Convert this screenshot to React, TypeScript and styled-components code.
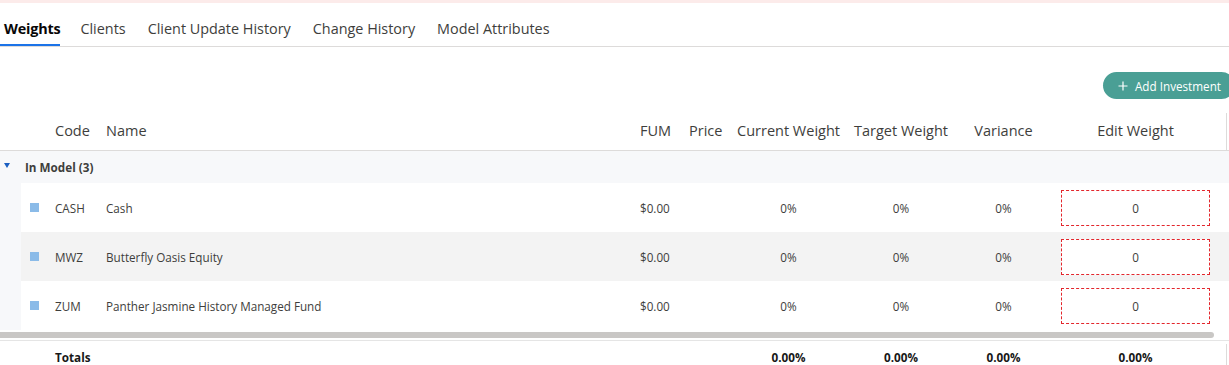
import React from 'react';
import styled, { createGlobalStyle } from 'styled-components';

const GlobalStyle = createGlobalStyle`
  body {
    margin: 0;
    background: #fff;
    font-family: "Open Sans", Lato, sans-serif;
    color: #3e3e3c;
    overflow: hidden;
  }
`

// widths measured from the layout: indent, icon, code, name, fum, price, current, target, variance, edit, gap, rest
const COLS = '21px 34px 51px 534px 49px 39px 121px 104px 101px 163px 9px 1fr';

const AlertStrip = styled.div`
  height: 3px;
  background: #fcebea;
`

const TabBar = styled.div`
  display: flex;
  height: 43px;
  border-bottom: 1px solid #dddbda;
`

const Tab = styled.div<{ $active?: boolean; $first?: boolean }>`
  display: flex;
  align-items: center;
  padding: ${p => (p.$first ? '8px 0 0 4px' : '8px 11px 0')};
  margin-right: ${p => (p.$first ? '9px' : '0')};
  font-size: 14.4px;
  letter-spacing: ${p => (p.$active ? '-0.2px' : '0')};
  font-weight: ${p => (p.$active ? 700 : 400)};
  color: ${p => (p.$active ? '#080707' : '#3e3e3c')};
  box-shadow: ${p => (p.$active ? 'inset 0 -2px 0 #1b73e8' : 'none')};
`

const Toolbar = styled.div`
  display: flex;
  justify-content: flex-end;
  padding: 25px 0 11px;
`

const AddButton = styled.button`
  display: flex;
  align-items: center;
  gap: 7px;
  height: 27px;
  margin-right: -6px;
  padding: 0 14px 0 15px;
  border: none;
  border-radius: 14px;
  background: #4a9f95;
  color: #fff;
  font-family: "Open Sans", Lato, sans-serif;
  font-size: 11.7px;
  cursor: pointer;
`

const Row = styled.div`
  display: grid;
  grid-template-columns: ${COLS};
  align-items: center;
`

const HeaderRow = styled(Row)`
  height: 40px;
  border-bottom: 1px solid #dddbda;
  font-size: 14.5px;
  color: #3e3e3c;
`

const GroupRow = styled(Row)`
  height: 32px;
  background: #f7f8fa;
  font-size: 11.7px;
  font-weight: 700;
  color: #3e3e3c;
`

const DataRow = styled(Row)<{ $striped?: boolean }>`
  height: 49px;
  font-size: 11.7px;
  color: #3e3e3c;
  background: linear-gradient(to right, #f7f8fa 21px, ${p => (p.$striped ? '#f3f3f3' : '#fff')} 21px);
`

const TotalsRow = styled(Row)`
  height: 32px;
  border-top: 1px solid #e5e5e5;
  font-size: 11.7px;
  font-weight: 700;
  color: #181818;
`

const Cell = styled.div<{ $center?: boolean }>`
  text-align: ${p => (p.$center ? 'center' : 'left')};
  white-space: nowrap;
`

const GroupLabel = styled.div`
  grid-column: span 3;
  margin-left: 4px;
  white-space: nowrap;
`

const EdgeCell = styled.div`
  align-self: stretch;
  margin-top: 3px;
  border-left: 1px solid #dddbda;
`

const Caret = styled.div`
  justify-self: start;
  margin-left: 4px;
  margin-top: -3px;
  width: 0;
  height: 0;
  border-left: 3px solid transparent;
  border-right: 3px solid transparent;
  border-top: 5px solid #1b5fc1;
`

const Swatch = styled.div`
  width: 9px;
  height: 9px;
  margin-left: 9px;
  background: #8bbbe8;
`

const WeightInput = styled.div`
  margin: 0 7px;
  height: 34px;
  display: flex;
  align-items: center;
  justify-content: center;
  border: 1px dashed #e3262c;
  background: #fff;
  font-size: 11.7px;
  color: #3e3e3c;
`

const ScrollTrack = styled.div`
  height: 10px;
  padding-top: 2px;
  box-sizing: border-box;
`

const ScrollThumb = styled.div`
  width: 1214px;
  height: 6px;
  background: #c9c7c5;
  border-radius: 0 3px 3px 0;
`

const tabs = ['Weights', 'Clients', 'Client Update History', 'Change History', 'Model Attributes'];

const holdings = [
  { code: 'CASH', name: 'Cash' },
  { code: 'MWZ', name: 'Butterfly Oasis Equity' },
  { code: 'ZUM', name: 'Panther Jasmine History Managed Fund' },
];

const PlusIcon = () => (
  <svg width="10" height="10" viewBox="0 0 10 10">
    <path d="M5 0.5V9.5M0.5 5H9.5" stroke="#fff" strokeWidth="1.2" />
  </svg>
);

export default function App() {
  return (
    <>
      <GlobalStyle />
      <AlertStrip />
      <TabBar>
        {tabs.map((t, i) => (
          <Tab key={t} $active={i === 0} $first={i === 0}>{t}</Tab>
        ))}
      </TabBar>
      <Toolbar>
        <AddButton><PlusIcon />Add Investment</AddButton>
      </Toolbar>
      <HeaderRow>
        <Cell />
        <Cell />
        <Cell>Code</Cell>
        <Cell>Name</Cell>
        <Cell>FUM</Cell>
        <Cell>Price</Cell>
        <Cell $center>Current Weight</Cell>
        <Cell $center>Target Weight</Cell>
        <Cell $center>Variance</Cell>
        <Cell $center>Edit Weight</Cell>
        <Cell />
        <EdgeCell />
      </HeaderRow>
      <GroupRow>
        <Caret />
        <GroupLabel>In Model (3)</GroupLabel>
      </GroupRow>
      {holdings.map((h, i) => (
        <DataRow key={h.code} $striped={i === 1}>
          <Cell />
          <Swatch />
          <Cell>{h.code}</Cell>
          <Cell>{h.name}</Cell>
          <Cell>$0.00</Cell>
          <Cell />
          <Cell $center>0%</Cell>
          <Cell $center>0%</Cell>
          <Cell $center>0%</Cell>
          <WeightInput>0</WeightInput>
        </DataRow>
      ))}
      <ScrollTrack>
        <ScrollThumb />
      </ScrollTrack>
      <TotalsRow>
        <Cell />
        <Cell />
        <Cell>Totals</Cell>
        <Cell />
        <Cell />
        <Cell />
        <Cell $center>0.00%</Cell>
        <Cell $center>0.00%</Cell>
        <Cell $center>0.00%</Cell>
        <Cell $center>0.00%</Cell>
        <Cell />
        <EdgeCell />
      </TotalsRow>
    </>
  );
}
